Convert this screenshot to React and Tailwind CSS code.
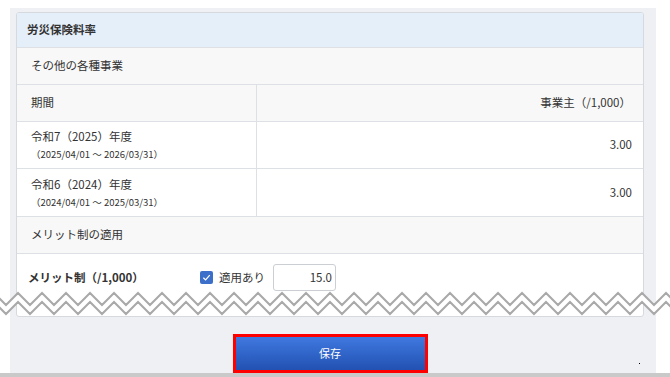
import React from "react";

function Zigzag() {
  const top = [];
  const bot = [];
  for (let i = 0; i <= 58; i++) {
    const x = -6 + i * 12;
    const peak = i % 2 === 0;
    top.push([x, peak ? 3 : 15]);
    bot.push([x, peak ? 12 : 24]);
  }
  const t = top.map((p) => p.join(",")).join(" ");
  const b = bot.map((p) => p.join(",")).join(" ");
  const band = t + " " + [...bot].reverse().map((p) => p.join(",")).join(" ");
  return (
    <svg
      className="absolute left-0 top-[290px]"
      width="670"
      height="28"
      viewBox="0 0 670 28"
    >
      <polygon points={band} fill="#ffffff" />
      <polyline points={t} fill="none" stroke="#a9a9a9" strokeWidth="2" />
      <polyline points={b} fill="none" stroke="#a9a9a9" strokeWidth="2" />
    </svg>
  );
}

export default function App() {
  return (
    <div className="relative w-[670px] h-[377px] overflow-hidden bg-white flex flex-col font-['Noto_Sans_CJK_JP',sans-serif] text-[#333333] text-[11.5px]">
      <div className="flex-1 pt-2 pl-[10px] pr-[14px] min-h-0">
        <div className="h-full bg-[#eff0f4] pt-1 pl-[6px] pr-[12px] flex flex-col">
          <div className="h-[306px] bg-white border border-[#d6d9de] rounded-[3px] flex flex-col overflow-hidden">
            <div className="h-[35px] shrink-0 bg-[#e5effa] border-b border-[#dde1e6] flex items-center pl-[10px] font-bold">
              労災保険料率
            </div>
            <div className="h-[37px] shrink-0 bg-[#f8f8f8] border-b border-[#dde1e6] flex items-center pl-[14px]">
              その他の各種事業
            </div>
            <div className="h-[37px] shrink-0 bg-[#f8f8f8] border-b border-[#dde1e6] flex">
              <div className="w-[240px] border-r border-[#dde1e6] flex items-center pl-[14px]">
                期間
              </div>
              <div className="flex-1 flex items-center justify-end pr-[12px]">
                事業主（/1,000）
              </div>
            </div>
            <div className="h-[47px] shrink-0 border-b border-[#dde1e6] flex">
              <div className="w-[240px] border-r border-[#dde1e6] flex flex-col justify-center pl-[14px]">
                <div className="leading-[18px]">令和7（2025）年度</div>
                <div className="leading-[18px] text-[9.5px]">（2025/04/01 ～ 2026/03/31）</div>
              </div>
              <div className="flex-1 flex items-center justify-end pr-[11px]">3.00</div>
            </div>
            <div className="h-[48px] shrink-0 border-b border-[#dde1e6] flex">
              <div className="w-[240px] border-r border-[#dde1e6] flex flex-col justify-center pl-[14px]">
                <div className="leading-[18px]">令和6（2024）年度</div>
                <div className="leading-[18px] text-[9.5px]">（2024/04/01 ～ 2025/03/31）</div>
              </div>
              <div className="flex-1 flex items-center justify-end pr-[11px]">3.00</div>
            </div>
            <div className="h-[37px] shrink-0 bg-[#f8f8f8] border-b border-[#dde1e6] flex items-center pl-[14px]">
              メリット制の適用
            </div>
            <div className="h-[47px] shrink-0 flex items-center pl-[11px]">
              <div className="w-[172px] font-bold whitespace-nowrap">メリット制（/1,000）</div>
              <span className="w-[13px] h-[13px] shrink-0 bg-[#3b6fc9] rounded-[2px] flex items-center justify-center">
                <svg width="9" height="9" viewBox="0 0 10 10">
                  <path d="M1.5 5.2 L4 7.6 L8.6 2.4" fill="none" stroke="#ffffff" strokeWidth="1.4" />
                </svg>
              </span>
              <span className="ml-[6px] whitespace-nowrap">適用あり</span>
              <div className="ml-[8px] w-[63px] h-[27px] shrink-0 border border-[#cbced3] rounded-[3px] flex items-center justify-end pr-[3px]">
                15.0
              </div>
            </div>
          </div>
          <div className="flex justify-center mt-[17px]">
            <button className="w-[195px] h-[39px] border-[3px] border-[#ff0000] bg-linear-to-b from-[#4079e0] to-[#2251b2] text-white text-[11px] flex items-center justify-center">
              保存
            </button>
          </div>
        </div>
      </div>
      <div className="h-[4px] shrink-0 bg-[#c9c9c9]" />
      <Zigzag />
      <span className="absolute left-[639px] top-[363px] w-[1px] h-[1px] bg-black" />
    </div>
  );
}
